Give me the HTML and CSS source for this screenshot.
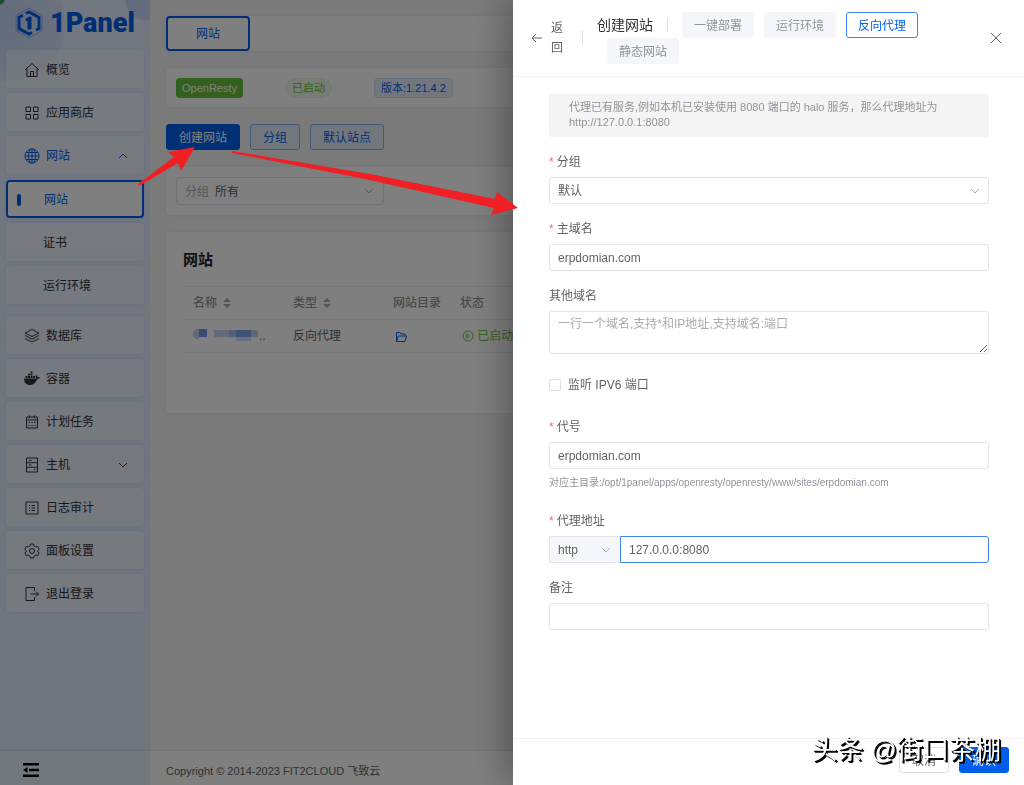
FILE: index.html
```
<!DOCTYPE html>
<html lang="zh-CN">
<head>
  <meta charset="UTF-8">
  <title>创建网站 - 1Panel</title>
  <meta name="viewport" content="width=device-width, initial-scale=1">
  <link rel="stylesheet" href="styles.css">
</head>
<body>
  <div class="app">
    <aside class="sidebar">
      <div class="logo">
        <svg class="logo-mark" viewBox="0 0 30 32">
          <path d="M15 1 28 8.500V23.500L15 31 2 23.500V8.500Z" fill="none" stroke="#8aaef0" stroke-width="1"/>
          <path d="M12 6.500 15 5 25 10.500V21.500L22 23M18 25.500 15 27 5 21.500V10.500L9 8.300" fill="none" stroke="#005eeb" stroke-width="3"/>
          <path d="M12 12 15 10H17V22H14V13L12 14Z" fill="#005eeb"/>
        </svg>
        <span>1Panel</span>
      </div>

      <nav class="menu">
        <a href="#" class="menu-item">
          <svg viewBox="0 0 16 16"><path d="M1 8 8 1.500 15 8M3 6.500V14.500H13V6.500M6.500 14.500V9.500H9.500V14.500"/></svg>
          <span>概览</span>
        </a>
        <a href="#" class="menu-item">
          <svg viewBox="0 0 16 16"><path d="M2 2H6.500V6.500H2ZM9.500 2H14V6.500H9.500ZM2 9.500H6.500V14H2ZM9.500 9.500H14V14H9.500Z"/></svg>
          <span>应用商店</span>
        </a>
        <a href="#" class="menu-item open">
          <svg viewBox="0 0 16 16"><circle cx="8" cy="8" r="7"/><path d="M8 1V15M1 8H15M2 4.500H14M2 11.500H14"/><ellipse cx="8" cy="8" rx="3.500" ry="7"/></svg>
          <span>网站</span>
          <svg class="caret" viewBox="0 0 10 10"><path d="M1 7 5 3 9 7"/></svg>
        </a>
        <div class="submenu">
          <a href="#" class="menu-item active">网站</a>
          <a href="#" class="menu-item">证书</a>
          <a href="#" class="menu-item">运行环境</a>
        </div>
        <a href="#" class="menu-item">
          <svg viewBox="0 0 16 16"><path d="M8 1.500 15 5 8 8.500 1 5ZM1 7.500 8 11 15 7.500M1 10.500 8 14 15 10.500"/></svg>
          <span>数据库</span>
        </a>
        <a href="#" class="menu-item">
          <svg class="solid" viewBox="0 0 16 16"><path d="M0 7.500H12Q12.300 6 11.500 5L12.500 4Q13.500 5 13.500 6.200 15 5.800 16 6.500 15.200 8.200 13.200 8.200 11 14 5.500 14 0 14 0 7.500ZM1.500 5H3.500V7H1.500ZM4 5H6V7H4ZM6.500 5H8.500V7H6.500ZM9 5H11V7H9ZM4 2.700H6V4.500H4ZM6.500 2.700H8.500V4.500H6.500ZM6.500 .500H8.500V2.200H6.500Z"/></svg>
          <span>容器</span>
        </a>
        <a href="#" class="menu-item">
          <svg viewBox="0 0 16 16"><path d="M2.500 3H13.500V14H2.500ZM2.500 6H13.500M5.500 1.500V4M10.500 1.500V4M4.500 8.500H6M7.300 8.500H8.800M10 8.500H11.500M4.500 11.500H6M7.300 11.500H8.800M10 11.500H11.500"/></svg>
          <span>计划任务</span>
        </a>
        <a href="#" class="menu-item">
          <svg viewBox="0 0 16 16"><path d="M2.500 1H13.500V15H2.500ZM2.500 5.700H13.500M2.500 10.300H13.500M5 3.400H7.500M5 8H7.500M10 12.700H11.500"/></svg>
          <span>主机</span>
          <svg class="caret" viewBox="0 0 10 10"><path d="M1 3 5 7 9 3"/></svg>
        </a>
        <a href="#" class="menu-item">
          <svg viewBox="0 0 16 16"><path d="M2 2H14V14H2ZM5 5.500H6M7.500 5.500H11M5 8H6M7.500 8H11M5 10.500H6M7.500 10.500H11"/></svg>
          <span>日志审计</span>
        </a>
        <a href="#" class="menu-item">
          <svg viewBox="0 0 16 16"><path d="M6.500 1H9.500L10.200 3 11.600 3.800 13.700 3.400 15.200 6 13.800 7.500V8.500L15.200 10 13.700 12.600 11.600 12.200 10.200 13 9.500 15H6.500L5.800 13 4.400 12.200 2.300 12.600 .800 10 2.200 8.500V7.500L.800 6 2.300 3.400 4.400 3.800 5.800 3Z"/><circle cx="8" cy="8" r="2.500"/></svg>
          <span>面板设置</span>
        </a>
        <a href="#" class="menu-item">
          <svg viewBox="0 0 16 16"><path d="M10.500 5V1.500H2V14.500H10.500V11M6.500 8H14.500M12 5.500 14.500 8 12 10.500"/></svg>
          <span>退出登录</span>
        </a>
      </nav>

      <div class="collapse">
        <button type="button" aria-label="收起菜单">
          <svg viewBox="0 0 16 14"><path d="M0 0H16V2.500H0ZM6 5.700H16V8.200H6ZM0 11.500H16V14H0ZM0 7 4.500 4V10Z"/></svg>
        </button>
      </div>
    </aside>

    <div class="main">
      <main class="content">
        <div class="card tabs">
          <button type="button" class="tab">网站</button>
        </div>

        <div class="card status">
          <span class="tag tag-app">OpenResty</span>
          <span class="tag tag-running">已启动</span>
          <span class="tag tag-version">版本:1.21.4.2</span>
        </div>

        <div class="actions">
          <button type="button" class="btn btn-primary">创建网站</button>
          <button type="button" class="btn btn-plain">分组</button>
          <button type="button" class="btn btn-plain">默认站点</button>
        </div>

        <div class="card filter">
          <div class="filter-select">
            <label for="filter-group">分组</label>
            <select id="filter-group"><option>所有</option></select>
            <svg class="chevron" viewBox="0 0 10 10"><path d="M1 3 5 7 9 3"/></svg>
          </div>
        </div>

        <div class="card list">
          <h2>网站</h2>
          <table>
            <thead>
              <tr>
                <th class="col-name">名称 <svg class="sort" viewBox="0 0 8 10"><path d="M4 0 8 4H0ZM0 6H8L4 10Z"/></svg></th>
                <th class="col-type">类型 <svg class="sort" viewBox="0 0 8 10"><path d="M4 0 8 4H0ZM0 6H8L4 10Z"/></svg></th>
                <th class="col-dir">网站目录</th>
                <th>状态</th>
              </tr>
            </thead>
            <tbody>
              <tr>
                <td>
                  <svg class="masked" viewBox="0 0 66 14">
                    <path d="M3 1H6V11H3L0 8V4Z" fill="#c9cdf3"/>
                    <path d="M6 1H14V9H6Z" fill="#7599ec"/>
                    <path d="M21 2H36V9H21Z" fill="#c6d5f5"/>
                    <path d="M36 2H43V9H36Z" fill="#a7c4f0"/>
                    <path d="M43 2H58V9H43Z" fill="#78a6ea"/>
                    <path d="M43 9H58V13H43Z" fill="#d6e2f8"/>
                    <path d="M58 2H63L65 4V9H58Z" fill="#b5d1f2"/>
                  </svg>..
                </td>
                <td>反向代理</td>
                <td><svg class="folder" viewBox="0 0 12 12"><path d="M1.500 10.500V1.500H5L6 3H10V5M1.500 10.500 3.300 5H11.500L10 10.500Z"/></svg></td>
                <td class="running"><svg viewBox="0 0 12 12"><circle cx="6" cy="6" r="5"/><path d="M4.800 4 8 6 4.800 8Z"/></svg> 已启动</td>
              </tr>
            </tbody>
          </table>
        </div>
      </main>

      <footer class="copyright">Copyright © 2014-2023 FIT2CLOUD 飞致云</footer>
    </div>
  </div>

  <div class="overlay"></div>

  <section class="drawer" role="dialog" aria-labelledby="drawer-title">
    <header class="drawer-header">
      <button type="button" class="back">
        <svg viewBox="0 0 12 12"><path d="M11 6H1M5 2 1 6 5 10"/></svg>
        <span>返回</span>
      </button>
      <div class="heading">
        <h1 id="drawer-title">创建网站</h1>
        <button type="button" class="btn btn-type">一键部署</button>
        <button type="button" class="btn btn-type">运行环境</button>
        <button type="button" class="btn btn-type selected">反向代理</button>
        <button type="button" class="btn btn-type">静态网站</button>
      </div>
      <button type="button" class="close" aria-label="关闭">
        <svg viewBox="0 0 12 12"><path d="M1 1 11 11M11 1 1 11"/></svg>
      </button>
    </header>

    <form class="drawer-body" id="site-form" onsubmit="event.preventDefault()">
      <p class="alert">代理已有服务,例如本机已安装使用 8080 端口的 halo 服务，那么代理地址为 http://127.0.0.1:8080</p>

      <div class="field">
        <label class="required" for="group">分组</label>
        <div class="select-box">
          <select id="group"><option>默认</option></select>
          <svg class="chevron" viewBox="0 0 10 10"><path d="M1 3 5 7 9 3"/></svg>
        </div>
      </div>

      <div class="field">
        <label class="required" for="domain">主域名</label>
        <input type="text" id="domain" value="erpdomian.com">
      </div>

      <div class="field">
        <label for="others">其他域名</label>
        <textarea id="others" placeholder="一行一个域名,支持*和IP地址,支持域名:端口"></textarea>
      </div>

      <div class="check">
        <input type="checkbox" id="ipv6">
        <label for="ipv6">监听 IPV6 端口</label>
      </div>

      <div class="field">
        <label class="required" for="alias">代号</label>
        <input type="text" id="alias" value="erpdomian.com">
        <p class="help">对应主目录:/opt/1panel/apps/openresty/openresty/www/sites/erpdomian.com</p>
      </div>

      <div class="field">
        <label class="required" for="proxy">代理地址</label>
        <div class="input-group">
          <div class="select-box protocol">
            <select aria-label="协议"><option>http</option></select>
            <svg class="chevron" viewBox="0 0 10 10"><path d="M1 3 5 7 9 3"/></svg>
          </div>
          <input type="text" id="proxy" class="focused" value="127.0.0.0:8080">
        </div>
      </div>

      <div class="field">
        <label for="remark">备注</label>
        <input type="text" id="remark">
      </div>
    </form>

    <footer class="drawer-footer">
      <button type="button" class="btn btn-default">取消</button>
      <button type="submit" form="site-form" class="btn btn-confirm">确认</button>
    </footer>
  </section>

  <!-- 步骤箭头 -->
  <svg class="arrows" width="520" height="220" viewBox="0 0 520 220">
    <path d="M138 184 174 157 168 152 195 147 181 171 178 163 139 186Z"/>
    <path d="M232 151 370 174 495 199 497 192 518 208 491 215 494 208 365 179 232 153Z"/>
  </svg>

  <div class="watermark">头条 @街口茶棚</div>
</body>
</html>
```
FILE: styles.css
```
* {
  box-sizing: border-box;
}

body {
  margin: 0;
  font-family: "Liberation Sans", "Noto Sans CJK SC", sans-serif;
  font-size: 12px;
  line-height: 20px;
  color: #606266;
}

button, input, select, textarea {
  font: inherit;
  color: inherit;
}

button {
  cursor: pointer;
}

h1, h2, p {
  margin: 0;
}

a {
  color: inherit;
  text-decoration: none;
}

svg {
  flex: none;
  fill: none;
  stroke: currentColor;
}

.app {
  display: flex;
  min-height: 100vh;
}

/* sidebar */
.sidebar {
  display: flex;
  flex-direction: column;
  width: 150px;
  color: #303133;
  background:
    radial-gradient(circle at 0 0, #30a060 4px, transparent 5px),
    radial-gradient(circle at 146px 0, #c8dafa 20px, transparent 21px),
    radial-gradient(circle at 8px 24px, #c6d8fa 0, #d8e5fc 56px, transparent 58px),
    linear-gradient(#e4eeff, #dfe8fb);
}

.logo {
  display: flex;
  align-items: center;
  gap: 6px;
  height: 50px;
  padding: 0 14px 4px;
  color: #005eeb;
  font-family: Roboto, sans-serif;
  font-size: 27px;
  font-weight: 900;
}

.logo-mark {
  width: 30px;
  height: 32px;
}

.menu {
  display: flex;
  flex: 1;
  flex-direction: column;
  gap: 5px;
  padding: 0 6px;
}

.menu-item {
  display: flex;
  align-items: center;
  gap: 6px;
  height: 38px;
  padding: 2px 16px 0 18px;
  border-radius: 4px;
  background: rgba(255, 255, 255, .4);
  box-shadow: 0 0 4px rgba(0, 94, 235, .08);
}

.menu-item svg {
  width: 16px;
  height: 16px;
}

.menu-item .solid {
  fill: currentColor;
  stroke: none;
}

.menu-item .caret {
  width: 10px;
  height: 10px;
  margin-left: auto;
}

.menu-item.open {
  color: #005eeb;
}

.submenu {
  display: flex;
  flex-direction: column;
  gap: 5px;
  margin: 1px 0 7px;
}

.submenu .menu-item {
  padding-left: 37px;
}

.submenu .active {
  gap: 23px;
  padding-left: 9px;
  border: 2px solid #005eeb;
  background: #fff;
  color: #005eeb;
}

.submenu .active::before {
  content: "";
  width: 4px;
  height: 12px;
  border-radius: 2px;
  background: #005eeb;
}

.collapse {
  display: flex;
  align-items: center;
  height: 35px;
  padding: 4px 23px 0;
  border-top: 1px solid #d3dcec;
  background: #e6eefc;
}

.collapse button {
  display: flex;
  padding: 0;
  border: 0;
  background: none;
  color: #000;
}

.collapse svg {
  width: 16px;
  height: 14px;
  fill: currentColor;
  stroke: none;
}

/* main page */
.main {
  display: flex;
  flex: 1;
  flex-direction: column;
  min-width: 0;
  background: #f4f4f4;
}

.content {
  display: flex;
  flex: 1;
  flex-direction: column;
  gap: 17px;
  padding: 16px;
}

.card {
  border-radius: 4px;
  background: #fff;
  box-shadow: 0 0 4px rgba(0, 0, 0, .06);
}

.tabs {
  display: flex;
}

.tab {
  width: 84px;
  height: 35px;
  border: 2px solid #005eeb;
  border-radius: 4px;
  background: #fff;
  color: #005eeb;
}

.status {
  display: flex;
  gap: 42px;
  align-items: center;
  height: 39px;
  padding: 0 10px;
}

.tag {
  height: 20px;
  padding: 0 6px;
  border-radius: 4px;
  font-size: 11px;
}

.tag-app {
  background: #67c23a;
  color: #fff;
}

.tag-running {
  border: 1px solid #e1f3d8;
  border-radius: 10px;
  background: #f0f9eb;
  color: #67c23a;
  line-height: 18px;
}

.tag-version {
  border: 1px solid #ccdffb;
  background: #e5effd;
  color: #005eeb;
  line-height: 18px;
}

.actions {
  display: flex;
  gap: 10px;
}

.btn {
  height: 26px;
  padding: 2px 12px 0;
  border: 1px solid #dcdfe6;
  border-radius: 3px;
  background: #fff;
}

.btn-primary, .btn-confirm {
  border-color: #005eeb;
  background: #005eeb;
  color: #fff;
}

.btn-plain {
  border-color: #80aff5;
  background: #e5effd;
  color: #005eeb;
}

.filter {
  padding: 10px;
}

.filter-select {
  position: relative;
  display: flex;
  align-items: center;
  gap: 6px;
  width: 208px;
  height: 28px;
  padding: 2px 0 0 8px;
  border: 1px solid #dcdfe6;
  border-radius: 4px;
}

.filter-select label {
  color: #a8abb2;
}

.filter-select select {
  flex: 1;
  padding: 0;
  border: 0;
  background: none;
  appearance: none;
}

.chevron {
  position: absolute;
  top: 50%;
  right: 9px;
  width: 10px;
  height: 10px;
  margin-top: -5px;
  color: #a8abb2;
  pointer-events: none;
}

.list {
  min-height: 181px;
  padding: 18px 17px;
}

.list h2 {
  margin-bottom: 16px;
  color: #1f2329;
  font-size: 15px;
  line-height: 20px;
}

table {
  width: 100%;
  border-collapse: collapse;
  table-layout: fixed;
}

th, td {
  height: 33px;
  padding: 0 10px;
  border-top: 1px solid #ebeef5;
  border-bottom: 1px solid #ebeef5;
  text-align: left;
  white-space: nowrap;
}

th {
  color: #909399;
  font-weight: 500;
}

.col-name, .col-type {
  width: 100px;
}

.col-dir {
  width: 67px;
}

.sort {
  width: 8px;
  height: 10px;
  margin-left: 3px;
  fill: #a8abb2;
  stroke: none;
  vertical-align: -1px;
}

.masked {
  width: 66px;
  height: 14px;
  stroke: none;
  vertical-align: -2px;
}

.folder {
  width: 12px;
  height: 12px;
  margin-left: 2px;
  color: #005eeb;
  vertical-align: -3px;
}

.running {
  color: #67c23a;
}

.running svg {
  width: 12px;
  height: 12px;
  margin-left: 2px;
  vertical-align: -2px;
}

.copyright {
  height: 35px;
  padding: 10px 16px 0;
  border-top: 1px solid #e4e7ed;
  background: #fff;
  font-size: 11px;
}

/* drawer */
.overlay {
  position: fixed;
  inset: 0;
  background: rgba(0, 0, 0, .5);
}

.drawer {
  position: fixed;
  top: 0;
  right: 0;
  bottom: 0;
  display: flex;
  flex-direction: column;
  width: calc(50% - 1px);
  background: #fff;
  box-shadow: -8px 0 32px rgba(0, 0, 0, .3);
}

.drawer-header {
  display: flex;
  align-items: center;
  height: 77px;
  padding: 0 22px 0 18px;
  border-bottom: 1px solid #f0f1f3;
}

.back {
  display: flex;
  align-items: center;
  gap: 8px;
  padding: 0;
  border: 0;
  background: none;
  text-align: left;
}

.back svg {
  width: 12px;
  height: 12px;
}

.back span {
  width: 12px;
}

.back::after {
  content: "";
  width: 1px;
  height: 14px;
  margin-left: 11px;
  background: #dcdfe6;
}

.heading {
  display: flex;
  flex: 1;
  flex-wrap: wrap;
  align-items: center;
  margin-left: 14px;
}

h1 {
  display: flex;
  align-items: center;
  margin-right: 4px;
  color: #303133;
  font-size: 14px;
  font-weight: 400;
}

h1::after {
  content: "";
  width: 1px;
  height: 14px;
  margin-left: 14px;
  background: #dcdfe6;
}

.btn-type {
  margin-left: 10px;
  padding: 2px 11px 0;
  border-color: #f4f6fa;
  background: #f4f6fa;
  color: #909399;
}

.btn-type.selected {
  border-color: #3a83f0;
  background: #fff;
  color: #005eeb;
}

.close {
  display: flex;
  padding: 0;
  border: 0;
  background: none;
}

.close svg {
  width: 12px;
  height: 12px;
}

.drawer-body {
  display: flex;
  flex: 1;
  flex-direction: column;
  gap: 14px;
  padding: 17px 35px 17px 36px;
  overflow: auto;
}

.alert {
  padding: 6px 20px 7px;
  border-radius: 3px;
  background: #f4f4f5;
  color: #909399;
  font-size: 11px;
  line-height: 15px;
}

.field {
  display: flex;
  flex-direction: column;
  gap: 4px;
}

.field label, .check label {
  line-height: 22px;
}

.required::before {
  content: "*";
  margin-right: 3px;
  color: #f56c6c;
}

.field input, .field textarea, .field select {
  width: 100%;
  height: 27px;
  padding: 0 8px;
  border: 1px solid #e0e3ea;
  border-radius: 3px;
  outline: 0;
  background: #fff;
}

.field textarea {
  display: block;
  height: 43px;
  padding: 2px 8px;
  resize: vertical;
}

.field textarea::placeholder {
  color: #a8abb2;
}

.field select {
  display: block;
  appearance: none;
}

.select-box {
  position: relative;
}

.check {
  display: flex;
  align-items: center;
  gap: 7px;
  height: 34px;
}

.check input {
  width: 12px;
  height: 12px;
  margin: 0;
  border: 1px solid #dcdfe6;
  border-radius: 2px;
  appearance: none;
}

.help {
  height: 23px;
  padding-top: 2px;
  color: #909399;
  font-size: 10px;
  line-height: 15px;
}

.input-group {
  display: flex;
}

.protocol {
  flex: none;
  width: 71px;
}

.input-group select {
  border-right: 0;
  border-radius: 3px 0 0 3px;
  background: #f5f7fa;
}

.input-group .focused {
  border-color: #3a83f0;
  border-radius: 0 3px 3px 0;
}

.drawer-footer {
  display: flex;
  justify-content: flex-end;
  gap: 10px;
  height: 47px;
  padding: 8px 15px;
  border-top: 1px solid #f0f1f3;
}

.arrows {
  position: absolute;
  top: 0;
  left: 0;
  fill: #f01f24;
  stroke: none;
  pointer-events: none;
}

.watermark {
  position: fixed;
  right: 23px;
  bottom: 18px;
  color: #fff;
  font-size: 26px;
  line-height: 34px;
  text-shadow: 1px 1px 0 #000, 2px 2px 0 #000;
  pointer-events: none;
}
```
